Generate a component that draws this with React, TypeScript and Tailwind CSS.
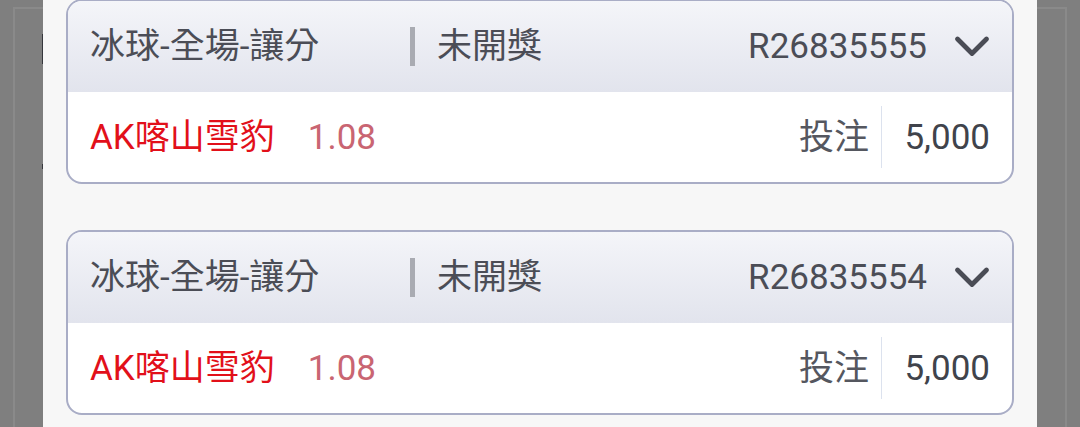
import React from "react";

type Bet = {
  market: string;
  status: string;
  ticket: string;
  team: string;
  odds: string;
  stake: string;
};

const bets: Bet[] = [
  { market: "冰球-全場-讓分", status: "未開獎", ticket: "R26835555", team: "AK喀山雪豹", odds: "1.08", stake: "5,000" },
  { market: "冰球-全場-讓分", status: "未開獎", ticket: "R26835554", team: "AK喀山雪豹", odds: "1.08", stake: "5,000" },
];

const Chevron = () => (
  <svg width="36" height="24" viewBox="0 0 36 24" fill="none" className="shrink-0">
    <polyline points="3.5,4 18,18.5 32.5,4" stroke="#4a4c55" strokeWidth="4.8" strokeLinecap="round" strokeLinejoin="round" />
  </svg>
);

const BetCard = ({ bet }: { bet: Bet }) => (
  <div className="overflow-hidden rounded-[16px] border-2 border-[#a9adc6] bg-white">
    {/* header row */}
    <div className="flex h-[91px] items-center bg-gradient-to-b from-[#f4f5f9] to-[#e2e4ed] pl-[22px] pr-[22px] text-[#4b4d56]">
      <span className="w-[320px] shrink-0">{bet.market}</span>
      <span className="h-[39px] w-[5px] shrink-0 bg-[#a9abb2]" />
      <span className="ml-[22px] flex-1">{bet.status}</span>
      <span>{bet.ticket}</span>
      <span className="ml-[27px] flex items-center">
        <Chevron />
      </span>
    </div>
    {/* body row */}
    <div className="flex h-[90px] items-center pl-[22px] pr-[22px]">
      <span className="text-[#e2101a]">{bet.team}</span>
      <span className="ml-[33px] text-[#c96572]">{bet.odds}</span>
      <span className="ml-auto text-[#55575f]">投注</span>
      <span className="mx-[12px] h-[62px] w-[1.5px] bg-[#dce2ee]" />
      <span className="ml-[10px] text-[#40434b]">{bet.stake}</span>
    </div>
  </div>
);

export default function App() {
  return (
    <div
      className="relative h-[427px] w-[1080px] overflow-hidden bg-[#7f7f7f] text-[35px] leading-none"
      style={{ fontFamily: "Roboto, 'Noto Sans CJK TC', sans-serif" }}
    >
      {/* page underneath, dimmed by the overlay */}
      <div className="ml-[13px] mr-[13px] mt-[7px] h-[420px] border-l-2 border-r-2 border-t-2 border-[#8a8a8a]">
        <div className="ml-[27px] mt-[25px] h-[30px] w-[3px] bg-[#36373c]" />
        <div className="ml-[27px] mt-[100px] h-[5px] w-[3px] bg-[#36373c]" />
      </div>

      {/* modal sheet */}
      <div className="absolute bottom-0 left-[43px] top-0 w-[994px] bg-[#f7f7f7] px-[23px]">
        <div className="-mt-[1px] flex flex-col gap-[46px]">
          {bets.map((b) => (
            <BetCard key={b.ticket} bet={b} />
          ))}
        </div>
      </div>
    </div>
  );
}
